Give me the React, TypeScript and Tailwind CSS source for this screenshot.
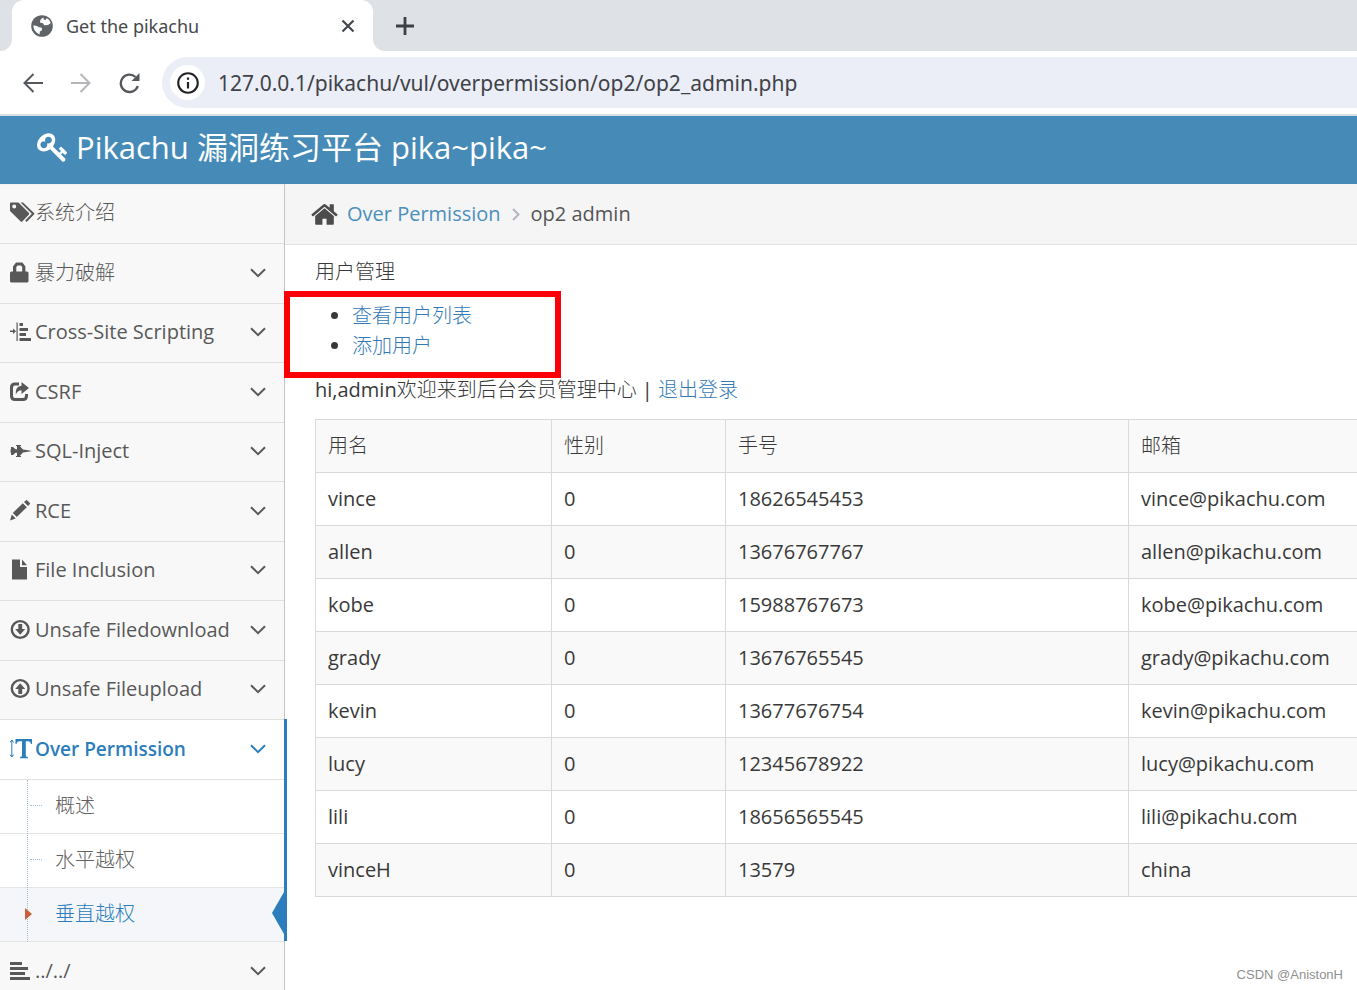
import React from 'react';
import { MdInfoOutline } from 'react-icons/md';

interface MenuItem {
  label: string;
  icon: React.ReactNode;
  expandable?: boolean;
  active?: boolean;
}

const Glyph: React.FC<{ children: React.ReactNode; width?: number }> = ({ children, width = 22 }) => (
  <svg width={width} height={22} viewBox={`0 0 ${width} 22`} fill="currentColor" aria-hidden="true">
    {children}
  </svg>
);

const ChevronDown = () => (
  <svg width="16" height="10" viewBox="0 0 16 10" fill="none" stroke="currentColor" strokeWidth="2" aria-hidden="true">
    <path d="M1 1.2 8 8.2 15 1.2" />
  </svg>
);

const menu: MenuItem[] = [
  {
    label: '系统介绍',
    icon: (
      <Glyph width={25}>
        <path
          fillRule="evenodd"
          d="M0 1.5Q0 .5 1 .5H8.5L19 11Q19.6 11.8 19 12.6L12.3 19.5Q11.5 20.2 10.7 19.5L0 9ZM4.2 2.6A2 2 0 1 0 4.2 6.6 2 2 0 1 0 4.2 2.6Z"
        />
        <path d="M10.5.5H13L24 11Q24.8 11.8 24 12.6L16.6 20 15.2 18.6 21.8 11.8Z" />
      </Glyph>
    ),
  },
  {
    label: '暴力破解',
    expandable: true,
    icon: (
      <Glyph>
        <path
          fillRule="evenodd"
          d="M0 11Q0 9.5 1.5 9.5H3V4.5L6 .5H12.4L15.4 4.5V9.5H17Q18.5 9.5 18.5 11V19Q18.5 20.5 17 20.5H1.5Q0 20.5 0 19ZM6.3 9.5H12.2V5L11 3.5H7.5L6.3 5Z"
        />
      </Glyph>
    ),
  },
  {
    label: 'Cross-Site Scripting',
    expandable: true,
    icon: (
      <Glyph>
        <path d="M0 9.5H3V7.5L6 10.3 3 13V11H0ZM6.5 1.5H7.7V20H6.5ZM9.5 2H13V5H9.5ZM9.5 7H18V10H9.5ZM9.5 12H16V15H9.5ZM9.5 17H21V20H9.5Z" />
      </Glyph>
    ),
  },
  {
    label: 'CSRF',
    expandable: true,
    icon: (
      <Glyph>
        <path
          d="M9 3H5Q1.5 3 1.5 6.5V15Q1.5 18.5 5 18.5H13Q16.5 18.5 16.5 15V13"
          fill="none"
          stroke="currentColor"
          strokeWidth="3"
        />
        <path d="M11.5 1 19 7 11.5 13V9.3Q8 9.2 5.8 13.5 5.2 5 11.5 4.7Z" />
      </Glyph>
    ),
  },
  {
    label: 'SQL-Inject',
    expandable: true,
    icon: (
      <Glyph width={23}>
        <path d="M1 7H3L5.5 9.3H7V6H6V5H11V6H9.8L13 9.6 18 10.2 22 11 18 11.8 13 12.4 9.8 16H11V17H6V16H7V12.7H5.5L3 15H1V12.5H.5V9.5H1Z" />
      </Glyph>
    ),
  },
  {
    label: 'RCE',
    expandable: true,
    icon: (
      <Glyph>
        <path d="M1.8 14.5 5.7 18.4 0 20.5ZM2.8 13 12.8 3.2 16.8 7.2 6.8 17ZM14 2 15.8.4Q16.5-.2 17.3.4L19.7 2.8Q20.3 3.5 19.7 4.3L18 6Z" />
      </Glyph>
    ),
  },
  {
    label: 'File Inclusion',
    expandable: true,
    icon: (
      <Glyph>
        <path d="M2 .5H10V8H17V20.5H2ZM12 .5 17 6.3H12Z" />
      </Glyph>
    ),
  },
  {
    label: 'Unsafe Filedownload',
    expandable: true,
    icon: (
      <Glyph>
        <circle cx="10.2" cy="10.5" r="8.4" fill="none" stroke="currentColor" strokeWidth="2.4" />
        <path d="M8.3 5H12.2V10H15.2L10.2 15.7 5.2 10H8.3Z" />
      </Glyph>
    ),
  },
  {
    label: 'Unsafe Fileupload',
    expandable: true,
    icon: (
      <Glyph>
        <circle cx="10.2" cy="10.5" r="8.4" fill="none" stroke="currentColor" strokeWidth="2.4" />
        <path d="M8.3 16H12.2V11H15.2L10.2 5.3 5.2 11H8.3Z" />
      </Glyph>
    ),
  },
  {
    label: 'Over Permission',
    expandable: true,
    active: true,
    icon: (
      <Glyph>
        <path d="M0 4.5 1.8 2 3.6 4.5M1.8 2V19M0 16.5 1.8 19 3.6 16.5" fill="none" stroke="currentColor" strokeWidth="1" />
        <path d="M5.5 1H22V6H21Q20.5 3.2 18 3.2H15.8V17.5Q15.8 19 18 19.2V20.3H9.8V19.2Q12 19 12 17.5V3.2H9.6Q7 3.2 6.5 6H5.5Z" />
      </Glyph>
    ),
  },
];

const subMenu = [
  { label: '概述', active: false },
  { label: '水平越权', active: false },
  { label: '垂直越权', active: true },
];

const users = [
  { name: 'vince', sex: '0', phone: '18626545453', email: 'vince@pikachu.com' },
  { name: 'allen', sex: '0', phone: '13676767767', email: 'allen@pikachu.com' },
  { name: 'kobe', sex: '0', phone: '15988767673', email: 'kobe@pikachu.com' },
  { name: 'grady', sex: '0', phone: '13676765545', email: 'grady@pikachu.com' },
  { name: 'kevin', sex: '0', phone: '13677676754', email: 'kevin@pikachu.com' },
  { name: 'lucy', sex: '0', phone: '12345678922', email: 'lucy@pikachu.com' },
  { name: 'lili', sex: '0', phone: '18656565545', email: 'lili@pikachu.com' },
  { name: 'vinceH', sex: '0', phone: '13579', email: 'china' },
];

const BrowserBar = () => (
  <div className="shrink-0 font-['Noto_Sans','Open_Sans',sans-serif]">
    {/* Tab strip */}
    <div className="flex h-[51px] bg-white">
      <div className="w-3 rounded-br-xl bg-[#dee1e6]" />
      <div className="w-[361px] bg-[#dee1e6]">
        <div className="flex h-full items-center rounded-t-xl bg-white pl-[19px] pr-[18px] text-[#45484c]">
          <svg width="22" height="22" viewBox="0 0 22 22" aria-hidden="true">
            <circle cx="11" cy="11" r="10.8" fill="#5f6368" />
            <path d="M12.5 2.4Q8.5 4.5 9 7.5L12 8.2 13.2 10.2 17 10 19.6 8.2Q19 4.5 15.6 3.2L14.5 5 12.6 4.6Z" fill="#fff" />
            <path d="M2.2 10.6Q5.5 10 8 12.2L10.8 12.8 11 15.2 8.8 16.4 8.6 19.4Q3 17.5 2.2 10.6Z" fill="#fff" />
          </svg>
          <span className="ml-[13px] grow text-lg">Get the pikachu</span>
          <button type="button" aria-label="Close tab">
            <svg width="14" height="14" viewBox="0 0 14 14" stroke="currentColor" strokeWidth="2.2">
              <path d="M1.5 1.5 12.5 12.5M12.5 1.5 1.5 12.5" />
            </svg>
          </button>
        </div>
      </div>
      <div className="flex grow items-center rounded-bl-xl bg-[#dee1e6] pl-[23px] text-[#3c4043]">
        <button type="button" aria-label="New tab">
          <svg width="18" height="18" viewBox="0 0 18 18" stroke="currentColor" strokeWidth="2.8">
            <path d="M9 0V18M0 9H18" />
          </svg>
        </button>
      </div>
    </div>

    {/* Toolbar */}
    <div className="flex h-[65px] items-center border-b-2 border-[#d9dde6] bg-white pl-[23px] text-[#55585c]">
      <button type="button" aria-label="Back">
        <svg width="20" height="20" viewBox="0 0 20 20" fill="none" stroke="currentColor" strokeWidth="2">
          <path d="M20 10H2M10.5 1 1.5 10 10.5 19" />
        </svg>
      </button>
      <button type="button" aria-label="Forward" className="ml-7 text-[#b4b6b9]">
        <svg width="20" height="20" viewBox="0 0 20 20" fill="none" stroke="currentColor" strokeWidth="2">
          <path d="M0 10H18M9.5 1 18.5 10 9.5 19" />
        </svg>
      </button>
      <button type="button" aria-label="Reload" className="ml-7">
        <svg width="22" height="22" viewBox="0 0 22 22" fill="none" stroke="currentColor" strokeWidth="2.4">
          <path d="M16.5 5A8.7 8.7 0 1 0 18.8 14" />
          <path d="M20.5 1V9H12.5Z" fill="currentColor" stroke="none" />
        </svg>
      </button>
      <div className="ml-[21px] flex h-[51px] grow items-center rounded-l-full bg-[#ebeef7] pl-2">
        <button
          type="button"
          aria-label="Site information"
          className="flex size-[35px] items-center justify-center rounded-full bg-white text-[#202124]"
        >
          <MdInfoOutline size={26} />
        </button>
        <input
          type="text"
          aria-label="Address"
          defaultValue="127.0.0.1/pikachu/vul/overpermission/op2/op2_admin.php"
          className="ml-[13px] grow bg-transparent text-[21px] text-[#3f4247] outline-none"
        />
      </div>
    </div>
  </div>
);

const Sidebar = () => (
  <nav className="w-[285px] shrink-0 border-r border-[#c4c4c4] bg-[#f8f8f8] text-[#585858]">
    <ul className="border-t border-[#f2f2f2]">
      {menu.map((item) => (
        <li
          key={item.label}
          className={`relative border-b border-[#e0e0e0] odd:h-[59px] even:h-[60px] ${item.active ? 'bg-white text-[#2b7dbc]' : ''}`}
        >
          <a href="#" className="flex h-full items-center pl-[10px] pr-[18px] pb-[2px]">
            <span className="flex w-[25px] shrink-0">{item.icon}</span>
            <span className={`grow whitespace-nowrap ${item.active ? 'text-[19px] font-semibold' : ''}`}>
              {item.label}
            </span>
            {item.expandable && <ChevronDown />}
          </a>
          {item.active && <span className="absolute -right-[3px] -top-px h-[222px] w-[3px] bg-[#2b7dbc]" />}
        </li>
      ))}
    </ul>

    <ul className="relative bg-white">
      {subMenu.map((item) => (
        <li key={item.label} className={`relative border-b border-[#e4e4e4] ${item.active ? 'bg-[#f4f6fa]' : ''}`}>
          <a
            href="#"
            className={`flex h-[53px] items-center pl-[55px] pb-[2px] ${item.active ? 'text-[#2b7dbc]' : 'text-[#616161]'}`}
          >
            {item.label}
          </a>
          {!item.active && <span className="absolute left-[30px] top-[25px] w-3 border-t border-dotted border-[#9dbdd6]" />}
          {item.active && (
            <>
              <svg className="absolute left-[25px] top-5 z-10" width="7" height="12" viewBox="0 0 7 12" fill="#c86139">
                <path d="M0 0 7 6 0 12Z" />
              </svg>
              <svg className="absolute right-0 top-1" width="12" height="42" viewBox="0 0 12 42" fill="#2b7dbc">
                <path d="M12 0V42L0 21Z" />
              </svg>
            </>
          )}
        </li>
      ))}
      <span className="absolute bottom-0 left-[27px] top-0 border-l border-dotted border-[#9dbdd6]" />
    </ul>

    <a href="#" className="flex h-[57px] items-center pl-[10px] pr-[18px]">
      <span className="flex w-[25px] shrink-0">
        <Glyph>
          <path d="M0 2H12V5H0ZM0 7H18V10H0ZM0 12H15V15H0ZM0 17H20V20H0Z" />
        </Glyph>
      </span>
      <span className="grow">../../</span>
      <ChevronDown />
    </a>
  </nav>
);

const UserTable = () => (
  <table className="mt-[14px] w-full table-fixed border-collapse text-left">
    <colgroup>
      <col className="w-[236px]" />
      <col className="w-[174px]" />
      <col className="w-[403px]" />
      <col />
    </colgroup>
    <thead>
      <tr className="h-[53px] bg-[#f9f9f9]">
        {['用名', '性别', '手号', '邮箱'].map((title) => (
          <th key={title} className="border border-r-0 border-[#d9d9d9] px-3 font-normal">
            {title}
          </th>
        ))}
      </tr>
    </thead>
    <tbody>
      {users.map((user) => (
        <tr key={user.name} className="h-[53px] even:bg-[#f9f9f9]">
          <td className="border border-r-0 border-[#d9d9d9] px-3">{user.name}</td>
          <td className="border border-r-0 border-[#d9d9d9] px-3">{user.sex}</td>
          <td className="border border-r-0 border-[#d9d9d9] px-3">{user.phone}</td>
          <td className="border border-r-0 border-[#d9d9d9] px-3">{user.email}</td>
        </tr>
      ))}
    </tbody>
  </table>
);

export default function App() {
  return (
    <div className="relative flex h-screen flex-col overflow-hidden bg-white font-['Open_Sans','Noto_Sans_CJK_SC_Light','Noto_Sans_CJK_SC',sans-serif] text-[20px] leading-[30px] text-[#393939]">
      <BrowserBar />

      <header className="flex h-[68px] shrink-0 items-center bg-[#468bb8] pl-[37px] pb-[6px] font-['Open_Sans','Noto_Sans_CJK_SC',sans-serif] text-white">
        <svg width="32" height="32" viewBox="0 0 1792 1792" fill="currentColor" aria-hidden="true">
          <path d="M832 512q0-80-56-136t-136-56-136 56-56 136q0 42 19 83-41-19-83-19-80 0-136 56t-56 136 56 136 136 56 136-56 56-136q0-42-19-83 41 19 83 19 80 0 136-56t56-136zm851 704q0 17-49 66t-66 49q-9 0-28.5-16t-36.5-33-38.5-40-24.5-26l-96 96 220 220q28 28 28 68 0 42-39 81t-81 39q-40 0-68-28l-671-671q-176 131-365 131-163 0-265.5-102.5t-102.5-265.5q0-160 95-313t248-248 313-95q163 0 265.5 102.5t102.5 265.5q0 189-131 365l355 355 96-96q-3-3-26-24.5t-40-38.5-33-36.5-16-28.5q0-17 49-66t66-49q13 0 23 10 6 6 46 44.5t82 79.5 86.5 86 73 78 28.5 41z" />
        </svg>
        <h1 className="ml-[7px] text-[31px]">Pikachu 漏洞练习平台 pika~pika~</h1>
      </header>

      <div className="flex min-h-0 grow">
        <Sidebar />

        <main className="min-w-0 grow">
          <nav
            aria-label="Breadcrumb"
            className="flex h-[61px] items-center border-b border-[#e2e2e2] bg-[#f5f5f5] pl-[25px] text-[#555]"
          >
            <svg width="29" height="29" viewBox="0 0 1792 1792" fill="#4c4c4c" aria-hidden="true">
              <path d="M1472 992v480q0 26-19 45t-45 19h-384v-384h-256v384h-384q-26 0-45-19t-19-45v-480q0-1 .5-3t.5-3l575-474 575 474q1 2 1 6zm223-69l-62 74q-8 9-21 11h-3q-13 0-21-7l-692-577-692 577q-12 8-24 7-13-2-21-11l-62-74q-8-10-7-23.5t11-21.5l719-599q32-26 76-26t76 26l244 204v-195q0-14 9-23t23-9h192q14 0 23 9t9 23v408l219 182q10 8 11 21.5t-7 23.5z" />
            </svg>
            <a href="#" className="ml-2 text-[#4c8fbd]">
              Over Permission
            </a>
            <svg className="mx-[11px]" width="8" height="13" viewBox="0 0 8 13" fill="none" stroke="#b2b6bf" strokeWidth="2" aria-hidden="true">
              <path d="M1 1 6.5 6.5 1 12" />
            </svg>
            <span>op2 admin</span>
          </nav>

          <div className="pl-[30px] pt-3">
            <p>用户管理</p>
            <div className="relative mb-[14px] mt-[14px]">
              <ul className="list-disc pl-[37px]">
                <li>
                  <a href="#" className="text-[#337ab7]">
                    查看用户列表
                  </a>
                </li>
                <li>
                  <a href="#" className="text-[#337ab7]">
                    添加用户
                  </a>
                </li>
              </ul>
              <div className="pointer-events-none absolute -bottom-[17px] -left-[31px] -top-[10px] w-[277px] border-[6px] border-[#fb0007]" />
            </div>
            <p>
              hi,admin欢迎来到后台会员管理中心 |{' '}
              <a href="#" className="text-[#337ab7]">
                退出登录
              </a>
            </p>
            <UserTable />
          </div>
        </main>
      </div>

      <span className="absolute bottom-[5px] right-[14px] font-['Liberation_Sans',sans-serif] text-[13px] leading-5 text-[#8f8f8f]">
        CSDN @AnistonH
      </span>
    </div>
  );
}
